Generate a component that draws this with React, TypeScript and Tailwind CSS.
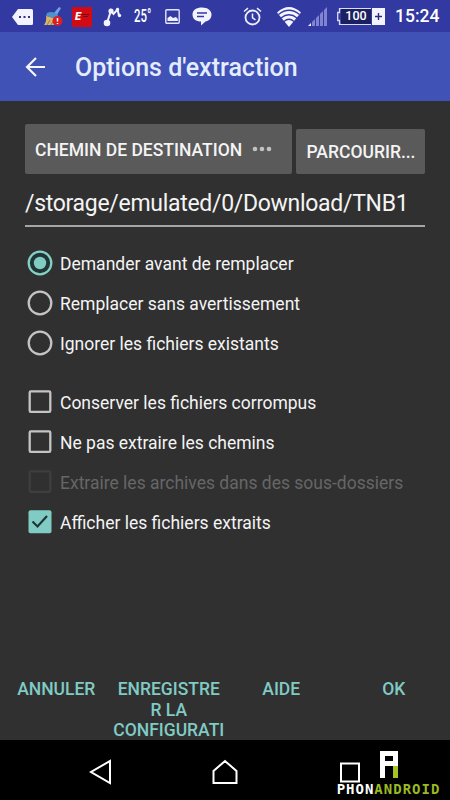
import { useState } from "react";
import type { ReactNode } from "react";

type Option = { label: string; disabled?: boolean };

const replaceModes: Option[] = [
  { label: "Demander avant de remplacer" },
  { label: "Remplacer sans avertissement" },
  { label: "Ignorer les fichiers existants" },
];

const flags: Option[] = [
  { label: "Conserver les fichiers corrompus" },
  { label: "Ne pas extraire les chemins" },
  { label: "Extraire les archives dans des sous-dossiers", disabled: true },
  { label: "Afficher les fichiers extraits" },
];

const actions: string[][] = [
  ["ANNULER"],
  ["ENREGISTRE", "R LA", "CONFIGURATI"],
  ["AIDE"],
  ["OK"],
];

function StatusBar() {
  return (
    <header className="flex h-8 items-center bg-[#3239a0] pl-3 pt-px text-white">
      {/* notifications */}
      <svg width="21" height="18" viewBox="0 0 21 18" className="shrink-0">
        <path d="M6 1h13.500q1.500 0 1.500 1.500v13q0 1.500-1.500 1.500H6L0 9z" fill="#f2f3ff" />
        <path d="M7 8h2v2H7zM11.500 8h2v2h-2zM16 8h2v2h-2z" fill="#30357e" />
      </svg>
      <svg width="21" height="20" viewBox="0 0 21 20" className="ml-2.5 shrink-0">
        <path d="M11 6l5-6 2 1-4 7z" fill="#6da5e0" />
        <path d="M4 6q6-3 11 2l-1 4-11-3z" fill="#4d91ce" />
        <path d="M3 9l11 3-1 6H1q3-4 2-9z" fill="#d9b66a" />
        <path d="M4 18l3-5M8 18l2-4" stroke="#a18046" />
        <circle cx="14.500" cy="14" r="5" fill="#d91e25" />
        <path d="M14.500 11v3.500M14.500 16v1" stroke="#fff" strokeWidth="1.500" />
      </svg>
      <span className="ml-2 flex h-5 w-5 shrink-0 items-center bg-[#d20a13] pl-[3px] font-['Roboto'] text-[11px] font-black italic leading-none">
        E
        <svg width="8" height="6" viewBox="0 0 8 6" className="-mt-1 ml-px shrink-0">
          <path d="M0 2.500h7M1 4.500h5" stroke="#720810" strokeWidth="1.200" />
        </svg>
      </span>
      <svg width="19" height="20" viewBox="0 0 19 20" className="ml-[11px] shrink-0">
        <path d="M4 16L8 3.500L10.500 7L14.500 2.500L16 8.500" fill="none" stroke="#f3f4ff" strokeWidth="2" />
        <circle cx="4" cy="16" r="3.300" fill="#f3f4ff" />
        <circle cx="8" cy="4" r="2.600" fill="#f3f4ff" />
        <circle cx="14.500" cy="2.500" r="1.700" fill="#f3f4ff" />
        <circle cx="16.500" cy="8.500" r="1.700" fill="#f3f4ff" />
      </svg>
      <span className="ml-3 w-[17px] shrink-0">
        <span className="block origin-left scale-x-[0.65] font-['Roboto'] text-[17.500px] font-medium leading-none">25°</span>
      </span>
      <svg width="15" height="15" viewBox="0 0 15 15" className="ml-3.5 shrink-0">
        <rect x=".8" y=".8" width="13.400" height="13.400" rx="1" fill="none" stroke="#e3e5ff" strokeWidth="1.400" />
        <path d="M2.500 12V9l3-2 2.500 2 3-1 1.800 2v2z" fill="#eef0ff" />
      </svg>
      <svg width="20" height="19" viewBox="0 0 20 19" className="ml-3 shrink-0">
        <path d="M10 .500c5.500 0 9.500 2.800 9.500 7s-3 6.500-6 7L9 18.500v-4C4 14.500.500 12 .500 7.500S4.500.500 10 .500z" fill="#f2f3ff" />
        <path d="M5 6h10M5 9.500h7" stroke="#3239a0" strokeWidth="1.300" />
      </svg>
      {/* system */}
      <svg width="19" height="19" viewBox="0 0 19 19" className="ml-[31px] shrink-0">
        <circle cx="9.500" cy="10.500" r="7" fill="none" stroke="#eceeff" strokeWidth="1.800" />
        <path d="M9.500 6.500v4.300l3 2M1 4.500L5 1.200M18 4.500L14 1.200" fill="none" stroke="#eceeff" strokeWidth="1.500" />
      </svg>
      <svg width="24" height="20" viewBox="0 0 24 20" className="ml-[15px] shrink-0">
        <path d="M12 20L0 5.500Q12-5.500 24 5.500z" fill="#f4f5ff" />
        <path d="M1.500 7.500q10.500-8.500 21 0M4 11q8-6.500 16 0M7 14.500q5-4.500 10 0" fill="none" stroke="#3239a0" strokeWidth="1.300" />
      </svg>
      <svg width="19" height="19" viewBox="0 0 19 19" className="ml-[7px] shrink-0">
        <path d="M0 19l3-3v3z" fill="#f2f3ff" />
        <path d="M4 15l3-3v7H4zM8 11l3-3v11H8zM12 7l3-3v15h-3zM16 3l3-3v19h-3z" fill="#8084d0" />
      </svg>
      <span className="ml-2.5 flex shrink-0 items-center">
        <svg width="4" height="17" viewBox="0 0 4 17">
          <path d="M4 .700H2.500V4.500H.700v8H2.500v3.800H4" fill="none" stroke="#d9dbfa" strokeWidth="1.300" />
        </svg>
        <span className="flex h-[17px] w-[30px] items-center justify-center border-y border-[#d9dbfa] bg-[#1b2160] font-['Roboto'] text-[12.500px] font-medium leading-none">100</span>
        <svg width="14" height="17" viewBox="0 0 14 17">
          <path d="M1 0h13v17H1z" fill="#f3f4ff" />
          <path d="M7.500 5v7M4 8.500h7" stroke="#262c80" strokeWidth="1.400" />
        </svg>
      </span>
      <span className="ml-2.5 shrink-0 pt-px font-['Roboto'] text-[17.500px] font-medium leading-none">15:24</span>
    </header>
  );
}

function Row({ children, disabled, label, onClick, role, checked }: {
  children: ReactNode;
  disabled?: boolean;
  label: string;
  onClick: () => void;
  role: string;
  checked: boolean;
}) {
  return (
    <button
      type="button"
      role={role}
      aria-checked={checked}
      disabled={disabled}
      onClick={onClick}
      className="flex h-10 items-center pl-[2px] text-left"
    >
      {children}
      <span className={`ml-[7px] whitespace-nowrap pt-0.5 text-[17.5px] ${disabled ? "text-[#666666]" : "text-[#f4f4f4]"}`}>{label}</span>
    </button>
  );
}

function RadioIcon({ checked }: { checked: boolean }) {
  return (
    <svg width="26" height="26" viewBox="0 0 26 26" className="shrink-0">
      <circle cx="13" cy="13" r="11.300" fill={checked ? "#203536" : "none"} stroke={checked ? "#86cfc6" : "#c4c4c4"} strokeWidth="2.300" />
      {checked && <circle cx="13" cy="13" r="6.200" fill="#80cbc4" />}
    </svg>
  );
}

function CheckIcon({ checked, disabled }: { checked: boolean; disabled?: boolean }) {
  return (
    <svg width="26" height="26" viewBox="0 0 26 26" className="shrink-0">
      {checked ? (
        <>
          <rect x="1.500" y="1.200" width="23" height="23" rx="2" fill="#80cbc4" />
          <path d="M5.500 12.500l5 5 9.500-10.500" fill="none" stroke="#203536" strokeWidth="2.200" />
        </>
      ) : (
        <rect x="2.700" y="2.300" width="20.600" height="20.600" rx="1.200" fill="none" stroke={disabled ? "#3e3e3e" : "#c4c4c4"} strokeWidth="2.300" />
      )}
    </svg>
  );
}

function Brand() {
  return (
    <div className="absolute right-[9px] top-[11px] flex w-[105px] flex-col items-center">
      <svg width="18" height="27" viewBox="0 0 18 27">
        <path fillRule="evenodd" d="M0 0h18v15H5v12H0zM5 5v5h8V5z" fill="#fff" />
        <path d="M13 15h5v12h-5z" fill="#a4c51d" />
      </svg>
      <div className="mt-[4px] whitespace-nowrap font-['DejaVu_Sans_Mono',monospace] text-[14px] font-bold leading-[15px] tracking-[1px] text-white">
        PHON<span className="text-[#9aba22]">ANDROID</span>
      </div>
    </div>
  );
}

export default function App() {
  const [mode, setMode] = useState(0);
  const [checked, setChecked] = useState([false, false, false, true]);

  const toggle = (i: number) => setChecked((c) => c.map((v, j) => (j === i ? !v : v)));

  return (
    <div className="flex h-[800px] w-[450px] flex-col overflow-hidden bg-[#303030] font-['Roboto',sans-serif]">
      <StatusBar />

      <div className="flex h-[69px] items-center bg-[#4052b5] pl-[25px]">
        <svg width="21" height="20" viewBox="0 0 21 20">
          <path d="M11 1L2 10l9 9M2 10h18" fill="none" stroke="#f5f6ff" strokeWidth="2.200" />
        </svg>
        <h1 className="ml-[29px] whitespace-nowrap pt-0.5 text-[25px] font-medium text-[#e4ecff]">Options d'extraction</h1>
      </div>

      <main className="flex flex-1 flex-col px-[25px] pt-[23px]">
        <div className="flex items-end gap-1">
          <button type="button" className="flex h-[50px] w-[267px] items-center rounded-xs bg-[#5a5a5b] pl-2.5 text-[17.5px] font-medium text-[#f4f4f4]">
            <span className="whitespace-nowrap pt-0.5">CHEMIN DE DESTINATION</span>
            <svg width="20" height="6" viewBox="0 0 20 6" className="ml-2.5">
              <circle cx="3" cy="3" r="2.300" fill="#c2c2c2" />
              <circle cx="10" cy="3" r="2.300" fill="#c2c2c2" />
              <circle cx="17" cy="3" r="2.300" fill="#c2c2c2" />
            </svg>
          </button>
          <button type="button" className="h-[45px] flex-1 whitespace-nowrap rounded-xs bg-[#5a5a5b] pl-px pt-0.5 text-[17.5px] font-medium text-[#f4f4f4]">
            PARCOURIR...
          </button>
        </div>

        <div className="flex h-[53px] items-center whitespace-nowrap border-b-2 border-[#a5a5a5] pt-2.5 text-[23px] tracking-[-0.3px] text-[#f4f4f4]">
          /storage/emulated/0/Download/TNB1
        </div>

        <div role="radiogroup" className="mt-4 flex flex-col">
          {replaceModes.map((o, i) => (
            <Row key={o.label} label={o.label} role="radio" checked={mode === i} onClick={() => setMode(i)}>
              <RadioIcon checked={mode === i} />
            </Row>
          ))}
        </div>

        <div className="mt-[19px] flex flex-col">
          {flags.map((o, i) => (
            <Row key={o.label} label={o.label} role="checkbox" checked={checked[i]} disabled={o.disabled} onClick={() => toggle(i)}>
              <CheckIcon checked={checked[i]} disabled={o.disabled} />
            </Row>
          ))}
        </div>
      </main>

      <div className="grid h-[61px] grid-cols-4 items-start text-[17.5px] font-medium leading-[20.5px] text-[#80cbc4]">
        {actions.map((lines) => (
          <button key={lines[0]} type="button" className="flex flex-col items-center whitespace-nowrap">
            {lines.map((l) => (
              <span key={l}>{l}</span>
            ))}
          </button>
        ))}
      </div>

      <nav className="relative flex h-[60px] items-center bg-black pl-[89px] pt-1">
        <svg width="23" height="26" viewBox="0 0 23 26">
          <path d="M21 2v22L2 13z" fill="none" stroke="#fff" strokeWidth="2" />
        </svg>
        <svg width="26" height="26" viewBox="0 0 26 26" className="ml-[100px]">
          <path d="M1.500 24V12L13 2l11.500 10v12z" fill="none" stroke="#fff" strokeWidth="2" />
        </svg>
        <svg width="21" height="21" viewBox="0 0 21 21" className="ml-[101px]">
          <rect x="2" y="1.500" width="18" height="18" fill="none" stroke="#fff" strokeWidth="2" />
        </svg>
        <Brand />
      </nav>
    </div>
  );
}
